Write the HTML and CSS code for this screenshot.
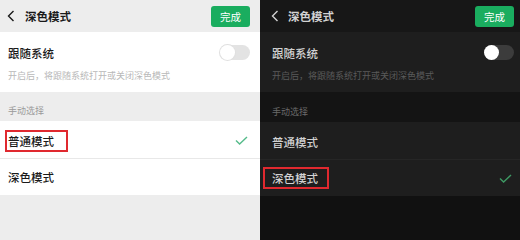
FILE: index.html
```html
<!DOCTYPE html>
<html lang="zh">
<head>
<meta charset="utf-8">
<link rel="stylesheet" href="styles.css">
</head>
<body>
<div class="wrap">
  <div class="panel light">
    <div class="nav">
      <svg class="back" width="8" height="12" viewBox="0 0 8 12"><path d="M6.5 1 L1.5 6 L6.5 11" fill="none" stroke="currentColor" stroke-width="1.4"/></svg>
      <span class="title">深色模式</span>
      <span class="done">完成</span>
    </div>
    <div class="section">
      <div class="follow">
        <span class="label">跟随系统</span>
        <span class="switch"><span class="knob"></span></span>
      </div>
      <div class="desc">开启后，将跟随系统打开或关闭深色模式</div>
    </div>
    <div class="group">手动选择</div>
    <div class="row first">
      <span class="mark">普通模式</span>
      <svg class="check" width="13" height="9" viewBox="0 0 13 9"><path d="M1 4.5 L4.6 8 L12 1" fill="none" stroke="currentColor" stroke-width="1.4"/></svg>
    </div>
    <div class="row">
      <span class="text">深色模式</span>
    </div>
  </div>
  <div class="panel dark">
    <div class="nav">
      <svg class="back" width="8" height="12" viewBox="0 0 8 12"><path d="M6.5 1 L1.5 6 L6.5 11" fill="none" stroke="currentColor" stroke-width="1.4"/></svg>
      <span class="title">深色模式</span>
      <span class="done">完成</span>
    </div>
    <div class="section">
      <div class="follow">
        <span class="label">跟随系统</span>
        <span class="switch"><span class="knob"></span></span>
      </div>
      <div class="desc">开启后，将跟随系统打开或关闭深色模式</div>
    </div>
    <div class="group">手动选择</div>
    <div class="row first">
      <span class="text">普通模式</span>
    </div>
    <div class="row">
      <span class="mark">深色模式</span>
      <svg class="check" width="13" height="9" viewBox="0 0 13 9"><path d="M1 4.5 L4.6 8 L12 1" fill="none" stroke="currentColor" stroke-width="1.4"/></svg>
    </div>
  </div>
</div>
</body>
</html>
```
FILE: styles.css
```css
* { box-sizing: border-box; }
html, body { margin: 0; padding: 0; }
body {
  font-family: "Noto Sans CJK SC", "Noto Sans", sans-serif;
  width: 520px;
  height: 240px;
  overflow: hidden;
}
.wrap { display: flex; height: 240px; }
.panel { width: 260px; height: 240px; display: flex; flex-direction: column; }

.nav { height: 32px; display: flex; align-items: center; }
.back { flex: none; }
.title { font-size: 11.5px; font-weight: 700; margin-left: 9px; flex: 1; }
.done {
  width: 39px; height: 21px; border-radius: 3px;
  background: #1aad5f; color: #fff;
  font-size: 10.5px; display: flex; align-items: center; justify-content: center;
}

.section { height: 60px; display: flex; flex-direction: column; }
.follow { height: 38px; display: flex; align-items: center; justify-content: space-between; padding-top: 3px; }
.label { font-size: 11.5px; font-weight: 500; }
.switch { width: 30px; height: 15px; border-radius: 8px; position: relative; }
.knob { position: absolute; left: 0; top: 0; width: 15px; height: 15px; border-radius: 50%; background: #fff; }
.desc { font-size: 9px; line-height: 12px; }

.group { height: 29px; font-size: 9px; display: flex; align-items: flex-end; padding-bottom: 4px; }

.row { height: 36px; display: flex; align-items: center; justify-content: space-between; }
.row.first { height: 38px; border-bottom: 1px solid; }
.text, .mark { font-size: 11.5px; line-height: 18px; font-weight: 500; }
.mark { border: 2px solid #e0292f; }

/* light */
.light { background: #ededed; color: #1a1a1a; }
.light .nav { padding: 0 10px 0 7px; background: #ededed; }
.light .title { margin-left: 10px; }
.light .section, .light .row { background: #fff; padding-left: 8px; padding-right: 10px; }
.light .row.first { border-bottom-color: #e8e8e8; padding-top: 2px; }
.light .desc { color: #b8b8b8; }
.light .group { color: #9a9a9a; padding-left: 8px; }
.light .switch { background: #e3e3e3; }
.light .knob { box-shadow: 0 0 0 1px #e0e0e0; }
.light .mark { padding: 0 12px 0 1px; margin-left: -3px; }
.light .check { color: #55bb8a; margin-right: 2px; }

/* dark */
.dark { background: #111111; color: #d2d2d2; }
.dark .nav { padding: 0 6px 0 11px; background: #171717; }
.dark .title { margin-left: 9px; }
.dark .section, .dark .row { background: #1e1e1e; padding-left: 12px; padding-right: 6px; }
.dark .row.first { border-bottom-color: #262626; padding-top: 2px; }
.dark .row { padding-right: 8px; }
.dark .desc { color: #5a5a5a; }
.dark .group { color: #6a6a6a; padding-left: 12px; background: #141414; height: 30px; }
.dark .switch { background: #3c3c3c; }
.dark .mark { padding: 0 9px 0 7px; margin-left: -9px; }
.dark .check { color: #3e9a64; }
```
